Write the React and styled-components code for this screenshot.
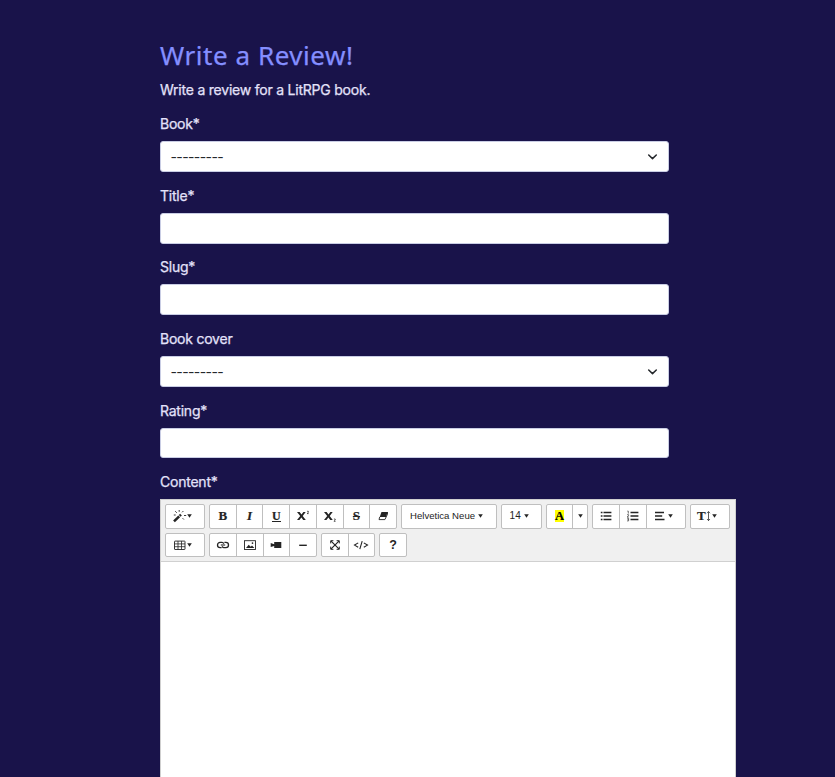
import React from "react";
import styled, { createGlobalStyle } from "styled-components";

const Global = createGlobalStyle`
  * { box-sizing: border-box; }
  body { margin: 0; background: #19134a; overflow: hidden; }
`;

const Page = styled.main`
  height: 777px;
  overflow: hidden;
  padding: 38px 0 0 160px;
  background: #19134a;
  color: #e4e2fa;
  font: 400 14px/20px Inter, "Liberation Sans", sans-serif;
  -webkit-text-stroke: 0.25px currentColor;
`;

const Heading = styled.h1`
  margin: 0;
  height: 34px;
  color: #848eff;
  font: 400 26px/34px "Noto Sans", sans-serif;
  letter-spacing: 0.55px;
  white-space: nowrap;
`;

const Intro = styled.p`
  margin: 8px 0 14px;
  letter-spacing: -0.22px;
`;

const Form = styled.form`
  display: grid;
  grid-template-rows: repeat(5, 71.65px);
  justify-items: start;
`;

const Field = styled.div`
  width: 509px;
`;

const Label = styled.label`
  display: block;
  height: 20px;
  letter-spacing: -0.23px;
`;

const Control = styled.div`
  display: flex;
  align-items: center;
  justify-content: space-between;
  height: 30.87px;
  margin-top: 7px;
  padding: 0 10px 0 9.5px;
  border: 1px solid #c9cde4;
  border-radius: 3px;
  background: #fff;
  color: #24272b;
`;

const Dashes = styled.span`
  padding-top: 1.5px;
  letter-spacing: -0.6px;
  -webkit-text-stroke: 0;
`;

const Editor = styled.section`
  width: 576px;
  height: 300px;
  margin-top: 7px;
  border: 1px solid #cfcfcf;
  background: #fff;
  color: #242424;
  -webkit-text-stroke: 0;
`;

const Toolbar = styled.div`
  display: flex;
  flex-direction: column;
  gap: 4px;
  height: 62px;
  padding: 4px;
  border-bottom: 1px solid #d0d0d0;
  background: #f0f0f0;
`;

const ToolRow = styled.div`
  display: flex;
  gap: 4px;
  height: ${(p) => p.$height}px;
`;

const Group = styled.div`
  display: flex;
  width: ${(p) => p.$width}px;
  border: 1px solid #bfbfbf;
  border-radius: 2px;
  background: #fff;
`;

const Tool = styled.button`
  display: flex;
  flex: ${(p) => (p.$width ? `0 0 ${p.$width}px` : "1 1 0")};
  align-items: center;
  justify-content: ${(p) => (p.$start ? "flex-start" : "center")};
  min-width: 0;
  gap: ${(p) => p.$gap ?? 2}px;
  padding: 0 0 1px ${(p) => p.$start ?? 0}px;
  border: 0;
  background: none;
  color: #242424;
  font: ${(p) => (p.$small ? 9.6 : 10)}px/12px "Liberation Sans", Arial, sans-serif;
  letter-spacing: ${(p) => p.$track ?? 0}px;
  white-space: nowrap;
  & + & { border-left: 1px solid #bfbfbf; }
`;

const Letter = styled.span`
  font: ${(p) => (p.$italic ? "italic " : "")}700 13px/14px "Liberation Serif", serif;
  -webkit-text-stroke: 0.2px currentColor;
  ${(p) => p.$underline && "border-bottom: 1px solid #242424; line-height: 10px; height: 11px; font-size: 12px;"}
  ${(p) => p.$strike && "text-decoration: line-through 1px;"}
  ${(p) => p.$mark && "background: #ff0; color: #000; line-height: 13px; height: 12px; font-size: 12.5px;"}
`;

const Question = styled.span`
  font: 700 12.5px/14px "Liberation Sans", Arial, sans-serif;
`;

const Drawing = styled.svg`
  flex: none;
  display: block;
  fill: none;
  stroke: currentColor;
  stroke-width: ${(p) => p.$weight ?? 1.2};
`;

const Chevron = () => (
  <Drawing width="11" height="11" viewBox="0 0 11 11" $weight={1.5}>
    <path d="M1.7 4 5.5 7.6 9.3 4" strokeLinecap="round" strokeLinejoin="round" />
  </Drawing>
);

const Caret = () => (
  <Drawing width="5" height="4" viewBox="0 0 5 4" $weight={0}>
    <path d="M0.2 0.2H4.8L2.5 3.8Z" fill="currentColor" />
  </Drawing>
);

const Icon = ({ width = 14, children }) => (
  <Drawing width={width} height="14" viewBox={`0 0 ${width} 14`}>
    {children}
  </Drawing>
);

const Wand = () => (
  <Icon>
    <path d="m1 12.4 5.2-5" strokeWidth="2.6" />
    <path d="m6.7 6.9 1.3-1.3" strokeWidth="2.4" />
    <path d="M6.2 1v1.8M2.2 2.2l1.6 1.6M10.4 2 9.1 3.3M11 6.5h2.2M9.6 9.2l1.3 1.3M0.8 6h1.9" strokeWidth="0.9" />
  </Icon>
);
const Script = ({ low }) => (
  <Icon>
    <path d="M1 3h2.6L5.5 5.6 7.4 3h2.3L6.7 7l3.1 4H7.2L5.4 8.4 3.4 11H1l3.2-4.1Z" fill="currentColor" stroke="none" />
    <path d={low ? "M10.9 10h1.3v1.1l-1.3 1.2h1.7" : "M11 2.3h1.4v1.1L11 4.6h1.7"} strokeWidth="0.7" />
  </Icon>
);
const Eraser = () => (
  <Icon>
    <path d="M5.5 3h6.2L10 8.1H3.7Z" fill="currentColor" stroke="none" />
    <path d="M3.7 8 3 10.6h5.9l2.6-5.5V3" strokeWidth="0.9" />
  </Icon>
);
const ListIcon = ({ ordered }) => (
  <Icon>
    <path d="M4.5 3.5H12.4M4.5 7H12.4M4.5 10.5H12.4" strokeWidth="1.7" />
    {ordered ? (
      <path d="M1.3 2.1h1v2.5M1.1 5.7h1.5v1L1.1 8h1.7M1 9.2h1.6v2.7H1M1.5 10.5h1" strokeWidth="0.65" />
    ) : (
      <path d="M1.8 3.5h1.7M1.8 7h1.7M1.8 10.5h1.7" strokeWidth="1.7" />
    )}
  </Icon>
);
const Align = () => (
  <Icon width={12}>
    <path d="M1 3.5h9M1 7h7.2M1 10.5h9.5" strokeWidth="1.5" />
  </Icon>
);
const LineHeight = () => (
  <Icon width={5}>
    <path d="M2.5 2.6v9M1 4.2l1.5-1.6L4 4.2M1 10l1.5 1.6L4 10" strokeWidth="0.75" />
  </Icon>
);
const TableIcon = () => (
  <Icon>
    <rect x="1.5" y="3.1" width="10.5" height="8.4" rx="0.5" strokeWidth="0.9" />
    <path d="M1.5 5.9H12M1.5 8.7H12M5 3.1v8.4M8.5 3.1v8.4" strokeWidth="0.8" />
  </Icon>
);
const LinkIcon = () => (
  <Icon>
    <path d="M7.9 5.6C7.4 4.8 6.8 4.4 6 4.4H4.1a2.6 2.6 0 0 0 0 5.2h1.5M6.1 8.4c.5.8 1.1 1.2 1.9 1.2h1.9a2.6 2.6 0 0 0 0-5.2H8.4" strokeWidth="1.3" />
    <path d="M4.8 7h4.4" strokeWidth="1.1" />
  </Icon>
);
const PictureIcon = () => (
  <Icon>
    <rect x="1.5" y="2.7" width="11" height="8.8" strokeWidth="0.9" />
    <path d="m3 10 2.7-3.3 2 2L9 7.6l2.3 2.4Z" fill="currentColor" stroke="none" />
    <circle cx="9.5" cy="5.1" r="0.85" fill="currentColor" stroke="none" />
  </Icon>
);
const Video = () => (
  <Icon>
    <path d="M5.2 4.1h7.1v6H5.2V8L1.7 9V5l3.5 1.2Z" fill="currentColor" stroke="none" />
  </Icon>
);
const Rule = () => (
  <Icon><path d="M3.2 7.3h7.6" strokeWidth="1.4" /></Icon>
);
const Expand = () => (
  <Icon>
    <path d="m3.1 3.1 7.8 7.8m0-7.8-7.8 7.8" strokeWidth="1.2" />
    <path d="M2.7 5.4V2.7h2.7M8.6 2.7h2.7v2.7M11.3 8.6v2.7H8.6M5.4 11.3H2.7V8.6" strokeWidth="1" />
  </Icon>
);
const Code = () => (
  <Icon width={16}>
    <path d="M5.2 4.9 1.5 7.1l3.7 2.2M10.8 4.9l3.7 2.2-3.7 2.2M9.2 3.2 6.8 11.2" strokeWidth="1.1" />
  </Icon>
);

const fields = [
  { name: "Book*", select: true },
  { name: "Title*" },
  { name: "Slug*" },
  { name: "Book cover", select: true },
  { name: "Rating*" },
];

export default function App() {
  return (
    <Page>
      <Global />
      <Heading>Write a Review!</Heading>
      <Intro>Write a review for a LitRPG book.</Intro>
      <Form>
        {fields.map((field) => (
          <Field key={field.name}>
            <Label>{field.name}</Label>
            <Control>
              {field.select && <><Dashes>---------</Dashes><Chevron /></>}
            </Control>
          </Field>
        ))}
        <div>
          <Label>Content*</Label>
          <Editor>
            <Toolbar>
              <ToolRow $height={25}>
                <Group $width={40}><Tool $start={6.5} $gap={0.5}><Wand /><Caret /></Tool></Group>
                <Group $width={188}>
                  <Tool><Letter>B</Letter></Tool>
                  <Tool><Letter $italic>I</Letter></Tool>
                  <Tool><Letter $underline>U</Letter></Tool>
                  <Tool><Script /></Tool>
                  <Tool><Script low /></Tool>
                  <Tool><Letter $strike>S</Letter></Tool>
                  <Tool><Eraser /></Tool>
                </Group>
                <Group $width={96}><Tool $start={8} $gap={3} $small>Helvetica Neue<Caret /></Tool></Group>
                <Group $width={41}><Tool $start={7.5} $gap={3} $track={0.2}>14<Caret /></Tool></Group>
                <Group $width={42}>
                  <Tool><Letter $mark>A</Letter></Tool>
                  <Tool $width={15}><Caret /></Tool>
                </Group>
                <Group $width={94}>
                  <Tool $width={26}><ListIcon /></Tool>
                  <Tool $width={27}><ListIcon ordered /></Tool>
                  <Tool $start={6.5}><Align /><Caret /></Tool>
                </Group>
                <Group $width={40}><Tool $start={6} $gap={0.5}><Letter>T</Letter><LineHeight /><Caret /></Tool></Group>
              </ToolRow>
              <ToolRow $height={24}>
                <Group $width={40}><Tool $start={6.5} $gap={0.5}><TableIcon /><Caret /></Tool></Group>
                <Group $width={108}>
                  <Tool><LinkIcon /></Tool>
                  <Tool><PictureIcon /></Tool>
                  <Tool><Video /></Tool>
                  <Tool><Rule /></Tool>
                </Group>
                <Group $width={54}>
                  <Tool><Expand /></Tool>
                  <Tool><Code /></Tool>
                </Group>
                <Group $width={28}><Tool><Question>?</Question></Tool></Group>
              </ToolRow>
            </Toolbar>
          </Editor>
        </div>
      </Form>
    </Page>
  );
}
